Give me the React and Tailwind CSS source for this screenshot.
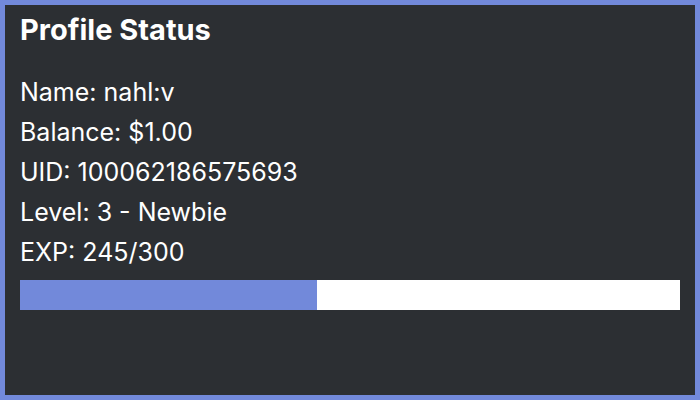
export default function App() {
  const lines = ['Name: nahl:v', 'Balance: $1.00', 'UID: 100062186575693', 'Level: 3 - Newbie', 'EXP: 245/300'];
  return (
    <div className="w-[700px] h-[400px] border-[5px] border-[#7289da] bg-[#2c2f33] px-[15px] pt-[7px] text-white" style={{ fontFamily: 'Inter, "Noto Sans", sans-serif' }}>
      <h1 className="text-[29px] font-bold leading-[36px]">Profile Status</h1>
      <div className="mt-[24px] flex flex-col">
        {lines.map((l) => (
          <div key={l} className="text-[25px] leading-[40px]">{l}</div>
        ))}
      </div>
      <div className="mt-[8px] h-[30px] w-[660px] bg-white">
        <div className="h-full bg-[#7289da]" style={{ width: '45%' }} />
      </div>
    </div>
  );
}
